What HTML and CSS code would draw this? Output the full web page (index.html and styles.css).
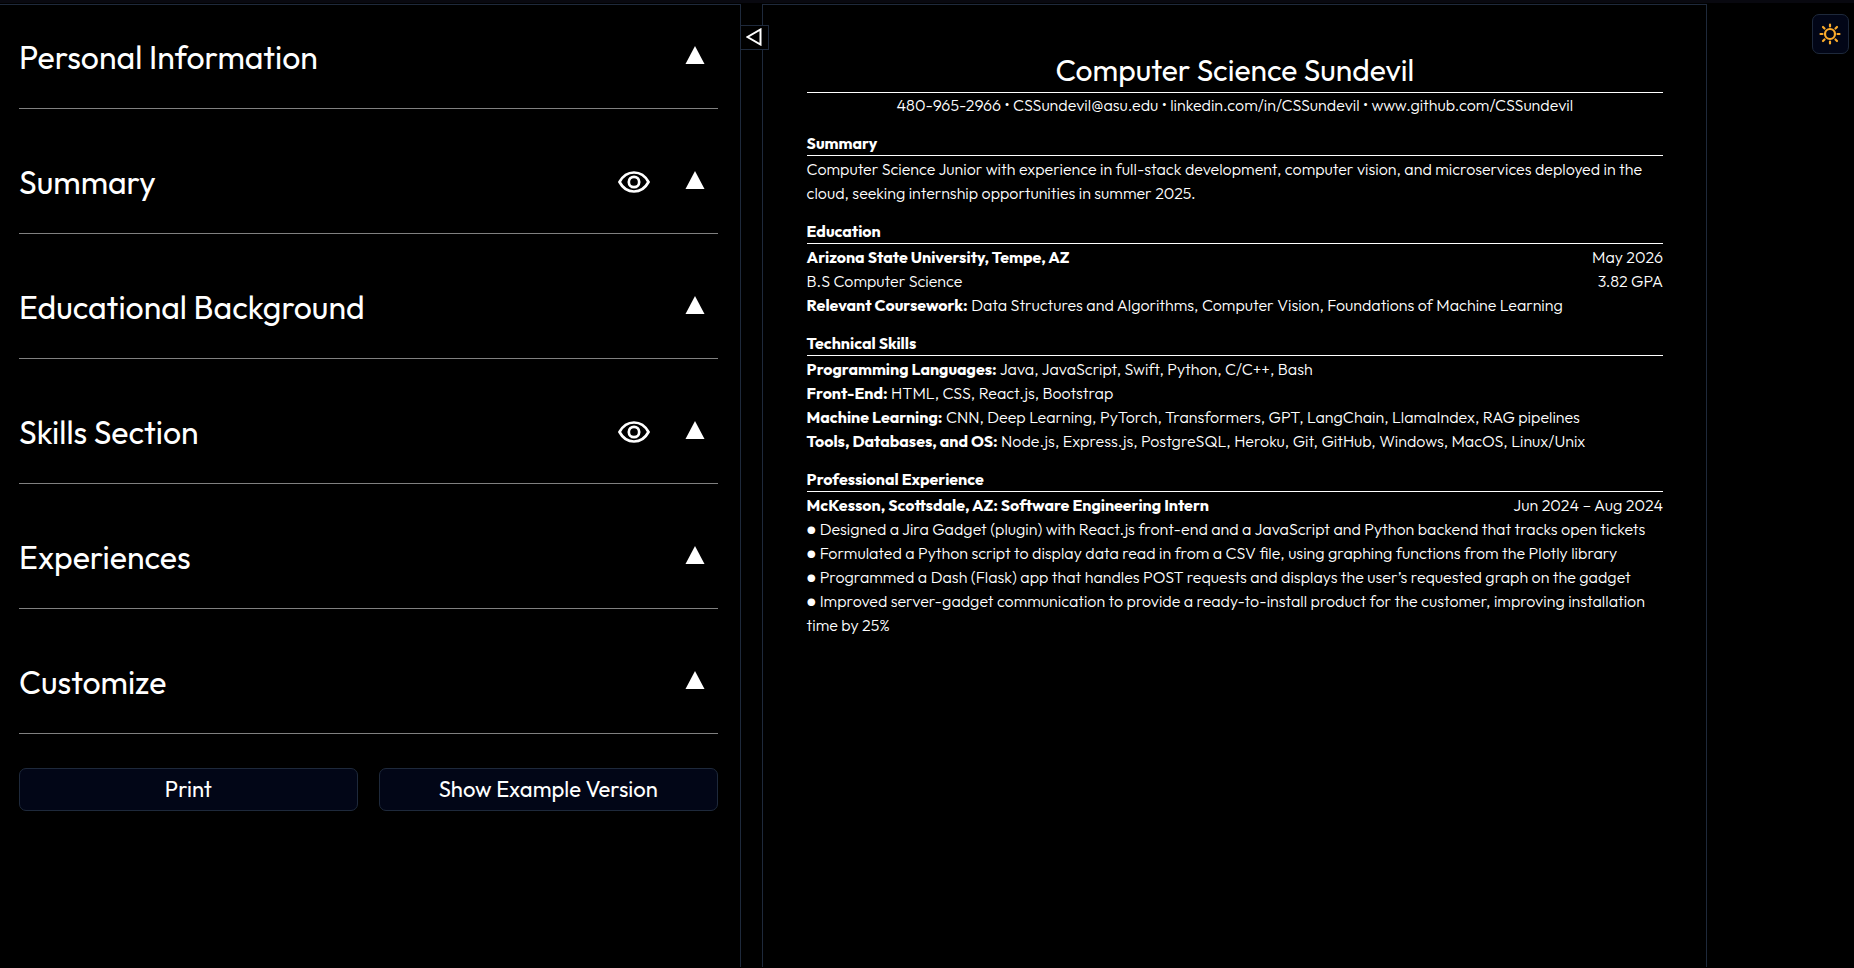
FILE: index.html
```html
<!DOCTYPE html>
<html lang="en">
<head>
<meta charset="utf-8">
<title>Resume Builder</title>
<link rel="stylesheet" href="styles.css">
</head>
<body>
<svg class="sprite" aria-hidden="true">
  <symbol id="up" viewBox="0 0 20 18"><path d="M10 0 19.500 18H.5z" fill="currentColor"/></symbol>
  <symbol id="eye" viewBox="0 0 32 22"><path d="M1.500 11C5 4.500 10 1.500 16 1.500S27 4.500 30.500 11C27 17.500 22 20.500 16 20.500S5 17.500 1.500 11Z" fill="none" stroke="currentColor" stroke-width="2.700"/><circle cx="16" cy="11" r="5.200" fill="none" stroke="currentColor" stroke-width="2.700"/></symbol>
</svg>
<div class="strip"></div>
<div class="app">
  <main class="editor">
    <section class="row"><h2>Personal Information</h2><button class="icon" aria-label="Expand Personal Information"><svg class="up"><use href="#up"/></svg></button></section>
    <section class="row"><h2>Summary</h2><button class="icon" aria-label="Toggle Summary"><svg class="eye"><use href="#eye"/></svg></button><button class="icon" aria-label="Expand Summary"><svg class="up"><use href="#up"/></svg></button></section>
    <section class="row"><h2>Educational Background</h2><button class="icon" aria-label="Expand Educational Background"><svg class="up"><use href="#up"/></svg></button></section>
    <section class="row"><h2>Skills Section</h2><button class="icon" aria-label="Toggle Skills Section"><svg class="eye"><use href="#eye"/></svg></button><button class="icon" aria-label="Expand Skills Section"><svg class="up"><use href="#up"/></svg></button></section>
    <section class="row"><h2>Experiences</h2><button class="icon" aria-label="Expand Experiences"><svg class="up"><use href="#up"/></svg></button></section>
    <section class="row"><h2>Customize</h2><button class="icon" aria-label="Expand Customize"><svg class="up"><use href="#up"/></svg></button></section>
    <div class="actions"><button class="action">Print</button><button class="action">Show Example Version</button></div>
    <button class="collapse" aria-label="Collapse editor"><svg viewBox="0 0 16 18"><path d="M14.500 1.500v15L1.500 9z" fill="none" stroke="currentColor" stroke-width="2"/></svg></button>
  </main>
  <article class="resume">
    <header>
      <h1>Computer Science Sundevil</h1>
      <p class="contact">480-965-2966 • CSSundevil@asu.edu • linkedin.com/in/CSSundevil • www.github.com/CSSundevil</p>
    </header>
    <section class="part">
      <h3>Summary</h3>
      <p>Computer Science Junior with experience in full-stack development, computer vision, and microservices deployed in the cloud, seeking internship opportunities in summer 2025.</p>
    </section>
    <section class="part">
      <h3>Education</h3>
      <p class="split"><b>Arizona State University, Tempe, AZ</b><span>May 2026</span></p>
      <p class="split"><span>B.S Computer Science</span><span>3.82 GPA</span></p>
      <p><b>Relevant Coursework:</b> Data Structures and Algorithms, Computer Vision, Foundations of Machine Learning</p>
    </section>
    <section class="part">
      <h3>Technical Skills</h3>
      <p><b>Programming Languages:</b> Java, JavaScript, Swift, Python, C/C++, Bash</p>
      <p><b>Front-End:</b> HTML, CSS, React.js, Bootstrap</p>
      <p><b>Machine Learning:</b> CNN, Deep Learning, PyTorch, Transformers, GPT, LangChain, LlamaIndex, RAG pipelines</p>
      <p><b>Tools, Databases, and OS:</b> Node.js, Express.js, PostgreSQL, Heroku, Git, GitHub, Windows, MacOS, Linux/Unix</p>
    </section>
    <section class="part">
      <h3>Professional Experience</h3>
      <p class="split"><b>McKesson, Scottsdale, AZ: Software Engineering Intern</b><span>Jun 2024 – Aug 2024</span></p>
      <p>● Designed a Jira Gadget (plugin) with React.js front-end and a JavaScript and Python backend that tracks open tickets</p>
      <p>● Formulated a Python script to display data read in from a CSV file, using graphing functions from the Plotly library</p>
      <p>● Programmed a Dash (Flask) app that handles POST requests and displays the user’s requested graph on the gadget</p>
      <p>● Improved server-gadget communication to provide a ready-to-install product for the customer, improving installation time by 25%</p>
    </section>
  </article>
  <button class="theme" aria-label="Switch theme"><svg viewBox="0 0 22 22" fill="none" stroke="currentColor" stroke-width="2.200" stroke-linecap="round"><circle cx="11" cy="11" r="5"/><path d="M11 1.500v2M11 18.500v2M1.500 11h2M18.500 11h2M4 4l1.500 1.500M16.500 16.500 18 18M4 18l1.500-1.500M16.500 5.500 18 4"/></svg></button>
</div>
</body>
</html>
```
FILE: styles.css
```css
* { box-sizing: border-box; }
body { margin: 0; min-height: 100vh; display: flex; flex-direction: column; background: #000; color: #fff; font-family: Outfit, Lato, sans-serif; }
h1, h2, h3, p { margin: 0; font-weight: 400; }
button { margin: 0; padding: 0; color: inherit; font: inherit; cursor: pointer; }
svg { display: block; }
.sprite { position: absolute; width: 0; height: 0; }
.strip { height: 3px; margin-bottom: 1px; background: #08080f; }
.app { position: relative; flex: 1; display: flex; gap: 21px; margin-bottom: 1px; }
.editor { position: relative; flex: 0 0 calc(40% - 1px); padding: 1px 22px 32px 19px; border: solid #1e293b; border-width: 1px 1px 0 0; }
.row { display: flex; align-items: center; padding: 31px 13px 31px 0; border-bottom: 1px solid #808080; }
.row + .row { margin-top: 22px; }
.row h2 { flex: 1; font-size: 32px; line-height: 40px; }
.icon { margin-bottom: 4px; background: none; border: 0; }
.icon + .icon { margin-left: 35px; }
.up { width: 20px; height: 18px; }
.eye { width: 32px; height: 22px; margin-top: 4px; }
.actions { display: grid; grid-template-columns: 1fr 1fr; gap: 21px; margin-top: 34px; }
.action { height: 43px; padding-bottom: 1px; font-size: 22px; background: #020617; border: 1px solid #1e293b; border-radius: 7px; }
.collapse { position: absolute; z-index: 1; top: 20px; left: 100%; width: 29px; height: 25px; display: flex; align-items: center; padding: 0 0 2px 5px; background: #000; border: 1px solid #1e293b; }
.collapse svg { width: 16px; height: 18px; }
.resume { flex: 0 0 51%; padding: 47px 43px 47px 44px; border: solid #1e293b; border-width: 1px 1px 0; font-size: 16px; line-height: 24px; }
.resume h1 { padding-bottom: 4px; border-bottom: 1px solid #fff; font-size: 30px; line-height: 36px; text-align: center; }
.resume p { font-weight: 300; }
.contact { text-align: center; }
.part { margin-top: 15px; }
.resume h3 { margin-bottom: 1px; border-bottom: 1px solid #fff; font-size: 16px; font-weight: 700; line-height: 23px; }
.resume b { font-weight: 700; }
.split { display: flex; justify-content: space-between; gap: 16px; }
.theme { position: absolute; top: 10px; right: 5px; width: 37px; height: 40px; display: grid; place-items: center; padding-right: 1px; background: #020617; border: 1px solid #1e293b; border-radius: 7px; color: #fbab2b; }
.theme svg { width: 22px; height: 22px; }
```
